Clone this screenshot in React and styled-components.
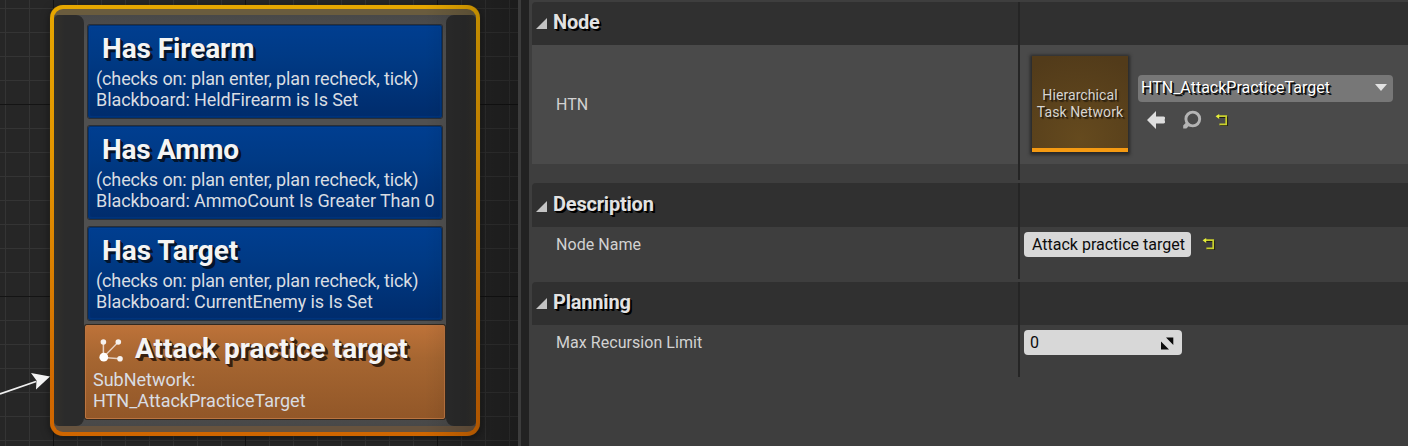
import React from "react";
import styled, { createGlobalStyle } from "styled-components";

const Global = createGlobalStyle`
  *, *::before, *::after { box-sizing: border-box; }
  body { margin: 0; background: #3e3e3e; font-family: Roboto, "Liberation Sans", sans-serif; overflow: hidden; }
`;

const Editor = styled.div`
  display: flex;
  width: 1408px;
  height: 446px;
  overflow: hidden;
`;

const Graph = styled.div`
  position: relative;
  flex: 0 0 518px;
  height: 446px;
  overflow: hidden;
  background:
    linear-gradient(#141414, #141414) 53px 0 / 1px 100% no-repeat,
    linear-gradient(#141414, #141414) 245px 0 / 1px 100% no-repeat,
    linear-gradient(#141414, #141414) 437px 0 / 1px 100% no-repeat,
    linear-gradient(#141414, #141414) 0 104px / 100% 1px no-repeat,
    linear-gradient(#141414, #141414) 0 296px / 100% 1px no-repeat,
    repeating-linear-gradient(90deg, transparent 0 5px, #343434 5px 6px, transparent 6px 24px),
    repeating-linear-gradient(180deg, transparent 0 8px, #343434 8px 9px, transparent 9px 24px),
    #262626;
  &::after {
    content: "";
    position: absolute;
    inset: 0;
    pointer-events: none;
    background: linear-gradient(90deg, transparent 82%, rgba(0, 0, 0, 0.28) 100%);
  }
`;

const Wire = styled.svg`
  position: absolute;
  left: 0;
  top: 366px;
`;

const NodeFrame = styled.div`
  position: absolute;
  left: 50px;
  top: 5px;
  width: 430px;
  height: 431px;
  padding: 4px;
  border-radius: 13px;
  background: linear-gradient(#e6a700, #e49600 35%, #d06800 90%, #cf6600);
  box-shadow: 0 2px 8px rgba(0, 0, 0, 0.5), 0 0 1px #7b5b1a;
`;

const NodeBody = styled.div`
  display: flex;
  height: 423px;
  padding: 6px 0;
  border-radius: 9px;
  background: linear-gradient(#6a5c3e 0 6px, #484848 6px, #505050 30px, #505050 390px, #484848 417px, #67533e 417px, #67533e);
`;

const PinRail = styled.div`
  flex: 0 0 30px;
  height: 411px;
  border-radius: ${(p) => (p.$right ? "8px 5px 5px 8px" : "5px 8px 8px 5px")};
  background: linear-gradient(${(p) => (p.$right ? "270deg" : "90deg")}, #33312b, #2b2b2b 35%);
`;

const Stack = styled.div`
  flex: 1;
  display: flex;
  flex-direction: column;
  align-items: center;
  padding-top: 10px;
`;

const Decorator = styled.section`
  width: 354px;
  height: 93px;
  margin-bottom: 8px;
  padding: 7px 0 0 7px;
  border: 1px solid #00306f;
  border-radius: 2px;
  background: linear-gradient(#003e90, #003a85 35%, #002c6c);
  box-shadow: 0 0 0 1px #2b2f36, inset 0 0 2px #0048a4;
`;

const TaskCard = styled.section`
  width: 360px;
  height: 94px;
  margin-top: -3px;
  padding: 7px 0 0 7px;
  border: 1px solid #bb7440;
  border-radius: 2px;
  background: linear-gradient(#bd7239, #a66631 35%, #925728);
  box-shadow: 0 0 0 1px #33291f;
`;

const TitleRow = styled.div`
  display: flex;
  align-items: center;
  height: 32px;
`;

const NodeTitle = styled.h2`
  margin: 0;
  padding-left: ${(p) => p.$indent}px;
  font-size: 28px;
  line-height: 32px;
  font-weight: 700;
  color: #f4f4f4;
  white-space: nowrap;
  letter-spacing: ${(p) => p.$track || 0}px;
  text-shadow: 1px 1px 0 ${(p) => p.$shade}, 2px 2px 0 ${(p) => p.$shade}, 3px 3px 0 ${(p) => p.$shade};
`;

const NodeText = styled.p`
  margin: ${(p) => p.$gap || 0}px 0 0;
  font-size: 18px;
  line-height: 21px;
  letter-spacing: ${(p) => p.$track || 0}px;
  color: #d9dde2;
  white-space: nowrap;
`;

const Splitter = styled.div`
  flex: 0 0 11px;
  background: #222;
  border-left: 3px solid #3c3c3c;
`;

const Details = styled.div`
  flex: 1;
  padding: 2px 0 0 3px;
  background: #3e3e3e;
`;

const Section = styled.section`
  position: relative;
  height: ${(p) => p.$height}px;
  &::after {
    content: "";
    position: absolute;
    left: 486px;
    top: 0;
    bottom: 3px;
    width: 2px;
    background: #252525;
  }
`;

const SectionHeader = styled.header`
  display: flex;
  align-items: center;
  height: ${(p) => p.$height}px;
  padding: 0 0 ${(p) => (p.$height > 43 ? 2 : 4)}px 4px;
  border-top-left-radius: 4px;
  background: #303030;
`;

const SectionTitle = styled.h3`
  margin: 0 0 0 6px;
  font-size: 20px;
  line-height: 24px;
  font-weight: 700;
  letter-spacing: -0.2px;
  color: #e2e2e2;
  text-shadow: 1px 1px 0 #000, 2px 2px 0 #000;
`;

const Row = styled.div`
  display: flex;
  align-items: ${(p) => (p.$tall ? "stretch" : "flex-start")};
  height: ${(p) => (p.$tall ? 119 : 52)}px;
  background: ${(p) => (p.$tall ? "#4a4a4a" : "transparent")};
`;

const Label = styled.div`
  flex: 0 0 492px;
  padding-left: 24px;
  font-size: 16px;
  line-height: ${(p) => p.$line}px;
  letter-spacing: 0.05px;
  color: #d2d2d2;
`;

const Thumbnail = styled.div`
  display: flex;
  align-items: center;
  justify-content: center;
  width: 96px;
  height: 96px;
  margin: 11px 0 0 8px;
  padding-top: 3px;
  border-bottom: 4px solid #f59a12;
  background: radial-gradient(circle at 50% 90%, #654a1e, #523b1a 90%);
  box-shadow: 0 1px 3px 2px #292929;
  text-align: center;
  font-size: 14px;
  line-height: 17px;
  letter-spacing: 0.08px;
  color: #d8d5d0;
  text-shadow: 1px 1px 0 #2d210f, 2px 2px 1px #2d210f;
  white-space: nowrap;
`;

const AssetPicker = styled.div`
  margin: 30px 0 0 10px;
`;

const Dropdown = styled.div`
  display: flex;
  align-items: center;
  justify-content: space-between;
  width: 255px;
  height: 27px;
  padding: 0 6px 2px 3px;
  border-radius: 4px;
  background: #777;
  font-size: 16px;
  color: #fff;
  text-shadow: 1px 1px 0 #111, 2px 2px 0 #111;
`;

const Actions = styled.div`
  display: flex;
  align-items: center;
  height: 20px;
  margin: 8px 0 0 8px;
`;

const ActionIcon = styled.svg`
  display: block;
  margin-right: ${(p) => p.$after}px;
`;

const TextField = styled.div`
  display: flex;
  align-items: center;
  justify-content: space-between;
  width: ${(p) => p.$width}px;
  height: 25px;
  margin: 5px 0 0;
  padding: 0 8px 0 ${(p) => p.$pad}px;
  border-radius: 4px;
  background: #d8d8d8;
  font-size: 16px;
  color: #0c0c0c;
  white-space: nowrap;
`;

const ResetSlot = styled.div`
  margin: 9px 0 0 9px;
  height: 16px;
`;

const DisclosureIcon = styled.svg`
  margin-top: 4px;
`;

const Glyph = styled.svg`
  display: block;
  flex: none;
  margin-left: ${(p) => p.$before || 0}px;
`;

const Disclosure = () => (
  <DisclosureIcon width="11" height="11" viewBox="0 0 11 11">
    <path d="M11 0V11H0Z" fill="#c4c4c4" />
  </DisclosureIcon>
);

const ResetIcon = () => (
  <Glyph width="16" height="16" viewBox="0 0 16 16">
    <path d="M6 5.2H14.3V13.3H7.2" fill="none" stroke="#1f1f14" strokeWidth="1.6" />
    <path d="M4.5 4.2H13.2V12.4H6.4" fill="none" stroke="#c9d02c" strokeWidth="1.7" />
    <path d="M2.6 4.2L6.2 1.9V6.9Z" fill="#e6f03a" />
  </Glyph>
);

const NetworkIcon = () => (
  <Glyph $before={6} width="25" height="25" viewBox="0 0 25 25">
    <path d="M4.4 5V20.2L19.3 5M4.6 20.4L21 21.7" fill="none" stroke="#e6d0c0" strokeWidth="1.5" />
    <circle cx="4.4" cy="5" r="2.8" fill="#f6f2ef" />
    <circle cx="19.3" cy="5" r="2.8" fill="#f6f2ef" />
    <circle cx="21" cy="21.7" r="2.8" fill="#f6f2ef" />
    <circle cx="4.8" cy="20.2" r="4.4" fill="#fff" />
  </Glyph>
);

const decorators = [
  { title: "Has Firearm", track: -0.1, detail: "Blackboard: HeldFirearm is Is Set" },
  { title: "Has Ammo", track: -0.25, detail: "Blackboard: AmmoCount Is Greater Than 0" },
  { title: "Has Target", track: 0, detail: "Blackboard: CurrentEnemy is Is Set" },
];

export default function App() {
  return (
    <>
      <Global />
      <Editor>
        <Graph>
          <NodeFrame>
            <NodeBody>
              <PinRail />
              <Stack>
                {decorators.map((d) => (
                  <Decorator key={d.title}>
                    <NodeTitle $indent={6} $track={d.track} $shade="#03142c">{d.title}</NodeTitle>
                    <NodeText $gap={3} $track={-0.12}>(checks on: plan enter, plan recheck, tick)</NodeText>
                    <NodeText $track={-0.08}>{d.detail}</NodeText>
                  </Decorator>
                ))}
                <TaskCard>
                  <TitleRow>
                    <NetworkIcon />
                    <NodeTitle $indent={11} $shade="#38200e">Attack practice target</NodeTitle>
                  </TitleRow>
                  <NodeText $gap={4}>SubNetwork:</NodeText>
                  <NodeText>HTN_AttackPracticeTarget</NodeText>
                </TaskCard>
              </Stack>
              <PinRail $right />
            </NodeBody>
          </NodeFrame>
          <Wire width="52" height="32" viewBox="0 0 52 32">
            <path d="M0 28L36 15.5" stroke="#f0f0f0" strokeWidth="1.8" />
            <path d="M50 10.5L31 7L36.5 14.5L36 23.5Z" fill="#f4f4f4" />
          </Wire>
        </Graph>
        <Splitter />
        <Details>
          <Section $height={181}>
            <SectionHeader $height={43}><Disclosure /><SectionTitle>Node</SectionTitle></SectionHeader>
            <Row $tall>
              <Label $line={119}>HTN</Label>
              <Thumbnail>Hierarchical<br />Task Network</Thumbnail>
              <AssetPicker>
                <Dropdown>
                  HTN_AttackPracticeTarget
                  <Glyph width="12" height="7" viewBox="0 0 12 7"><path d="M0 0H12L6 7Z" fill="#e2e2e2" /></Glyph>
                </Dropdown>
                <Actions>
                  <ActionIcon $after={16} width="20" height="20" viewBox="0 0 20 20">
                    <path d="M1 10L10 1V6.5H17.5Q19.5 6.5 19 8.5L18.6 10L19 11.5Q19.5 13.5 17.5 13.5H10V19Z" fill="#dedede" />
                  </ActionIcon>
                  <ActionIcon $after={11} width="20" height="20" viewBox="0 0 20 20">
                    <circle cx="10.8" cy="9" r="6.9" fill="none" stroke="#b4b4b4" strokeWidth="2.9" />
                    <path d="M1.2 18.6V15.5L4.6 12L7.6 15.2L4.4 18.6Z" fill="#b4b4b4" />
                  </ActionIcon>
                  <ResetIcon />
                </Actions>
              </AssetPicker>
            </Row>
          </Section>
          <Section $height={99}>
            <SectionHeader $height={44}><Disclosure /><SectionTitle>Description</SectionTitle></SectionHeader>
            <Row>
              <Label $line={35}>Node Name</Label>
              <TextField $width={167} $pad={8}>Attack practice target</TextField>
              <ResetSlot><ResetIcon /></ResetSlot>
            </Row>
          </Section>
          <Section $height={98}>
            <SectionHeader $height={43}><Disclosure /><SectionTitle>Planning</SectionTitle></SectionHeader>
            <Row>
              <Label $line={35}>Max Recursion Limit</Label>
              <TextField $width={158} $pad={6}>
                0
                <Glyph width="14" height="14" viewBox="0 0 14 14">
                  <path d="M6 1.5H13.3V9ZM1 5.5V13.5H9Z" fill="#0a0a0a" />
                </Glyph>
              </TextField>
            </Row>
          </Section>
        </Details>
      </Editor>
    </>
  );
}
